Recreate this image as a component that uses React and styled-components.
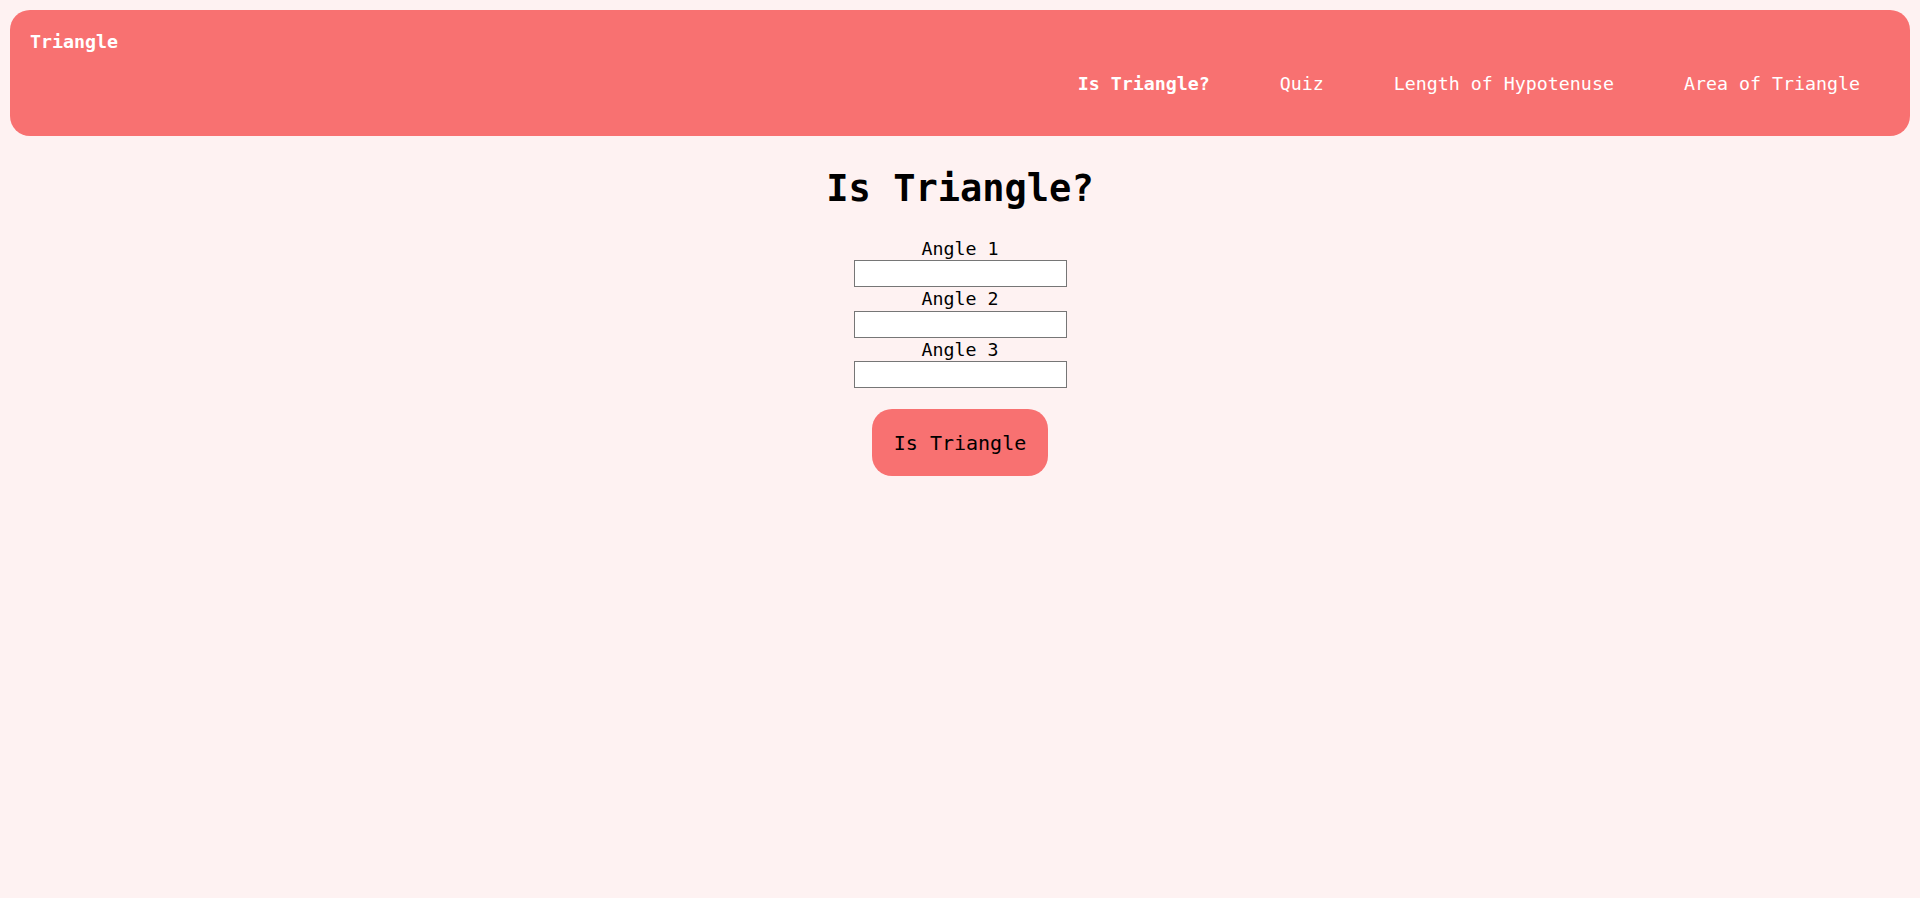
import React from "react";
import styled, { createGlobalStyle } from "styled-components";

const Global = createGlobalStyle`
  html, body {
    margin: 0;
    padding: 0;
    background: #fef2f2;
  }
  body {
    font-family: "DejaVu Sans Mono", "Liberation Mono", monospace;
    color: #000;
  }
  * { box-sizing: border-box; }
`;

const Page = styled.div`
  padding: 10px;
  min-height: 898px;
`;

const Nav = styled.nav`
  background: #f87171;
  border-radius: 20px;
  height: 126px;
  padding: 21px 0 0 20px;
  display: flex;
  flex-direction: column;
`;

const Brand = styled.div`
  color: #fff;
  font-weight: 700;
  font-size: 18.3px;
  line-height: 22px;
`;

const Links = styled.ul`
  list-style: none;
  margin: 19.6px 0 0 0;
  padding: 0 15px 0 0;
  display: flex;
  justify-content: flex-end;
`;

const LinkItem = styled.li`
  padding: 0 35px;
  font-size: 18.3px;
  line-height: 22px;
  color: #fff;
  font-weight: ${(p) => (p.$active ? 700 : 400)};
`;

const Main = styled.main`
  display: flex;
  flex-direction: column;
  align-items: center;
`;

const Title = styled.h1`
  margin: 31px 0 0 0;
  font-size: 37px;
  line-height: 44px;
  font-weight: 700;
`;

const Form = styled.div`
  margin-top: 25.5px;
  display: flex;
  flex-direction: column;
  align-items: center;
`;

const Label = styled.label`
  display: block;
  font-size: 18.3px;
  line-height: 23.5px;
  text-align: center;
`;

const Input = styled.input`
  display: block;
  width: 213px;
  height: 27px;
  background: #fff;
  border: 1px solid #767676;
  margin: 0;
  padding: 1px 2px;
  font-family: inherit;
`;

const Button = styled.button`
  margin-top: 21px;
  width: 176px;
  height: 67px;
  border: none;
  border-radius: 20px;
  background: #f87171;
  color: #000;
  font-family: "DejaVu Sans Mono", "Liberation Mono", monospace;
  font-size: 20px;
  line-height: 24px;
  display: inline-flex;
  align-items: center;
  justify-content: center;
  padding: 0;
  cursor: pointer;
`;

export default function App() {
  const links = ["Is Triangle?", "Quiz", "Length of Hypotenuse", "Area of Triangle"];
  return (
    <>
      <Global />
      <Page>
        <Nav>
          <Brand>Triangle</Brand>
          <Links>
            {links.map((l, i) => (
              <LinkItem key={l} $active={i === 0}>
                {l}
              </LinkItem>
            ))}
          </Links>
        </Nav>
        <Main>
          <Title>Is Triangle?</Title>
          <Form>
            {[1, 2, 3].map((n) => (
              <React.Fragment key={n}>
                <Label htmlFor={`angle${n}`}>Angle {n}</Label>
                <Input id={`angle${n}`} type="number" />
              </React.Fragment>
            ))}
            <Button>Is Triangle</Button>
          </Form>
        </Main>
      </Page>
    </>
  );
}
